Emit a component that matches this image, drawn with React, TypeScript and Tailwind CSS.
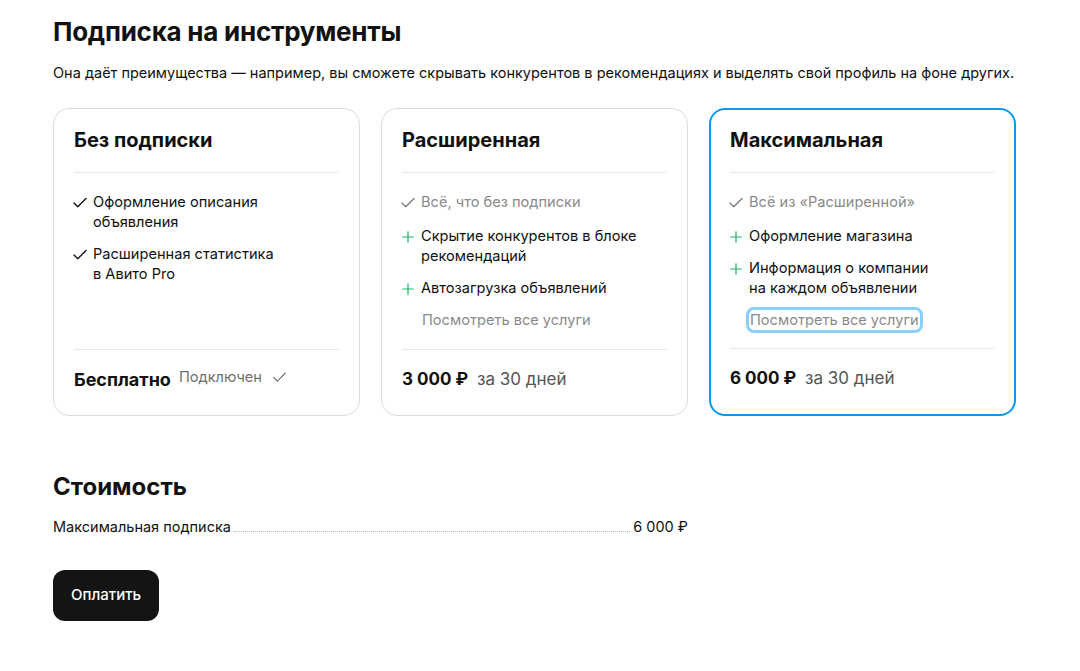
import { Check, Plus } from "lucide-react";

type Feature = { text: string; kind: "check" | "muted" | "plus" };

interface Plan {
  title: string;
  features: Feature[];
  more?: boolean;
  active?: boolean;
  focused?: boolean;
}

const plans: Plan[] = [
  {
    title: "Без подписки",
    features: [
      { text: "Оформление описания\nобъявления", kind: "check" },
      { text: "Расширенная статистика\nв Авито Pro", kind: "check" },
    ],
  },
  {
    title: "Расширенная",
    features: [
      { text: "Всё, что без подписки", kind: "muted" },
      { text: "Скрытие конкурентов в блоке\nрекомендаций", kind: "plus" },
      { text: "Автозагрузка объявлений", kind: "plus" },
    ],
    more: true,
  },
  {
    title: "Максимальная",
    features: [
      { text: "Всё из «Расширенной»", kind: "muted" },
      { text: "Оформление магазина", kind: "plus" },
      { text: "Информация о компании\nна каждом объявлении", kind: "plus" },
    ],
    more: true,
    active: true,
    focused: true,
  },
];

function FeatureRow({ f }: { f: Feature }) {
  return (
    <li className="-ml-[3px] flex items-start gap-[4px]">
      {f.kind === "plus" ? (
        <Plus className="mt-[2px] h-[18px] w-[18px] shrink-0 text-[#1fb35c]" strokeWidth={1.6} />
      ) : (
        <Check
          className={`mt-[2px] h-[18px] w-[18px] shrink-0 ${f.kind === "muted" ? "text-[#7a7a7a]" : "text-[#111]"}`}
          strokeWidth={1.8}
        />
      )}
      <span
        className={`whitespace-pre-line text-[14.6px] leading-[20px] ${f.kind === "muted" ? "text-[#8a8a8a]" : "text-[#111]"}`}
      >
        {f.text}
      </span>
    </li>
  );
}

function PlanCard({ plan, footer }: { plan: Plan; footer: React.ReactNode }) {
  return (
    <div
      className={`flex h-[308px] flex-col rounded-[16px] ${
        plan.active ? "border-2 border-[#0a99f2] px-[19px]" : "border border-[#dcdcdc] px-[20px]"
      }`}
    >
      <h3 className={`text-[20px] font-bold leading-[24px] text-[#111] ${plan.active ? "pt-[18px]" : "pt-[19px]"}`}>
        {plan.title}
      </h3>
      <div className="mt-[20px] border-t border-[#e8e8e8]" />
      <ul className="flex flex-1 flex-col gap-[12px] pt-[19px]">
        {plan.features.map((f, i) => (
          <div key={i} className={i === 1 && plan.features[0].kind === "muted" ? "mt-[2px]" : ""}>
            <FeatureRow f={f} />
          </div>
        ))}
        {plan.more && (
          <li className="flex pl-[20px]">
            <span
              className={`text-[14.6px] leading-[20px] text-[#8a8a8a] ${
                plan.focused ? "-mx-[1px] rounded-[5px] px-[1px] outline-[3px] outline-[#8bd0fb] outline-solid" : ""
              }`}
            >
              Посмотреть все услуги
            </span>
          </li>
        )}
      </ul>
      <div className="border-t border-[#e8e8e8]" />
      <div className="flex h-[65px] items-center pb-[6px]">{footer}</div>
    </div>
  );
}

function Price({ value }: { value: string }) {
  return (
    <div className="flex items-baseline gap-[9px]">
      <span className="text-[17px] font-bold">{value}</span>
      <span className="text-[17px] text-[#555]">за 30 дней</span>
    </div>
  );
}

export default function App() {
  return (
    <div
      className="min-h-screen bg-white px-[53px] pt-[15px] text-[#111]"
      style={{ fontFamily: "Inter, 'Noto Sans', sans-serif" }}
    >
      <h1 className="text-[26px] font-bold leading-[34px] tracking-[-0.25px]">Подписка на инструменты</h1>
      <p className="mt-[14px] text-[14.5px] leading-[20px] text-[#111]">
        Она даёт преимущества — например, вы сможете скрывать конкурентов в рекомендациях и выделять свой профиль на
        фоне других.
      </p>

      <div className="mt-[25px] grid w-[963px] grid-cols-3 gap-[21px]">
        <PlanCard
          plan={plans[0]}
          footer={
            <div className="flex items-center gap-[8px]">
              <span className="text-[18px] font-bold">Бесплатно</span>
              <span className="-mt-[4px] text-[14.6px] text-[#6f6f6f]">Подключен</span>
              <Check className="-mt-[4px] ml-[1px] h-[17px] w-[17px] text-[#6f6f6f]" strokeWidth={1.6} />
            </div>
          }
        />
        <PlanCard plan={plans[1]} footer={<Price value="3 000 ₽" />} />
        <PlanCard plan={plans[2]} footer={<Price value="6 000 ₽" />} />
      </div>

      <h2 className="mt-[55px] text-[24px] font-bold leading-[32px]">Стоимость</h2>
      <div className="mt-[15px] flex w-[635px] items-end text-[14.5px] leading-[18px]">
        <span>Максимальная подписка</span>
        <span className="mx-[3px] mb-[4px] flex-1 border-b border-dotted border-[#b5b5b5]" />
        <span>6 000 ₽</span>
      </div>

      <button className="mt-[34px] h-[51px] rounded-[12px] bg-[#141414] px-[18px] text-[15px] font-medium text-white">
        Оплатить
      </button>
    </div>
  );
}
